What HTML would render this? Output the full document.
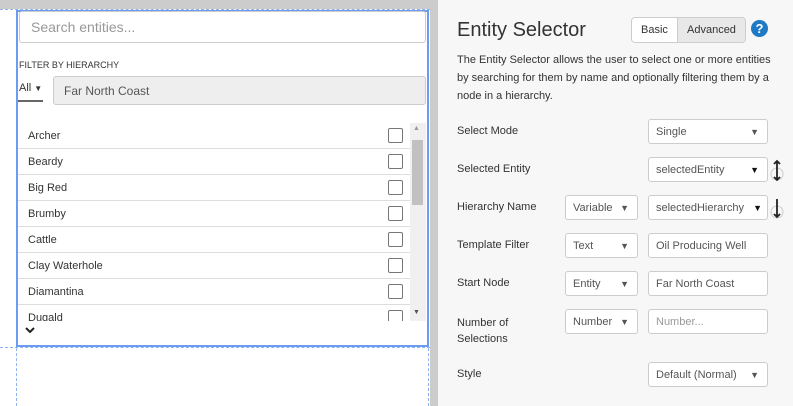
<!DOCTYPE html>
<html><head><meta charset="utf-8"><style>
*{box-sizing:border-box;margin:0;padding:0}
body{width:793px;height:406px;position:relative;overflow:hidden;background:#fff;font-family:"Liberation Sans",sans-serif;color:#333}
.a{position:absolute}
.lbl{font-size:11px;color:#333}
.sel{position:absolute;background:#fff;border:1px solid #ccc;border-radius:3px;height:25px;font-size:11px;color:#555;padding:6px 7px;line-height:12px}
.sel .ar{position:absolute;right:8px;top:6px;font-size:9px;color:#555}
.row{position:absolute;left:18px;width:392px;height:26px;border-bottom:1px solid #ddd;font-size:11px;color:#333;padding:7px 10px}
.cb{position:absolute;left:370px;top:5px;width:15px;height:15px;border:1.5px solid #777;border-radius:2px}
</style></head><body>
<div class="a" style="left:0;top:0;width:438px;height:9px;background:#ccc"></div>
<div class="a" style="left:430px;top:0;width:8px;height:406px;background:#ccc"></div>
<div class="a" style="left:0;top:9px;width:430px;border-top:1px dashed #8fb2f0"></div>
<div class="a" style="left:0;top:347px;width:430px;border-top:1px dashed #8fb2f0"></div>
<div class="a" style="left:16px;top:9px;height:397px;border-left:1px dashed #8fb2f0"></div>
<div class="a" style="left:428px;top:9px;height:397px;border-left:1px dashed #8fb2f0"></div>
<div class="a" style="left:16px;top:10px;width:413px;height:337px;border:2px solid #6c9cf0"></div>
<div class="a" style="left:19px;top:11px;width:407px;height:32px;border:1px solid #ccc;border-radius:3px;font-size:14px;color:#999;padding:7px 11px">Search entities...</div>
<div class="a" style="left:19px;top:60px;font-size:9px;color:#333">FILTER BY HIERARCHY</div>
<div class="a" style="left:19px;top:82px;font-size:11px;color:#333">All <span style="font-size:8px">▼</span></div>
<div class="a" style="left:18px;top:100px;width:25px;height:2px;background:#666"></div>
<div class="a" style="left:53px;top:76px;width:373px;height:29px;background:#eee;border:1px solid #ccc;border-radius:3px;font-size:12px;color:#555;padding:7px 10px">Far North Coast</div>
<div class="a" style="left:18px;top:123px;width:408px;height:198px;overflow:hidden">
<div class="row" style="left:0;top:0">Archer<div class="cb"></div></div>
<div class="row" style="left:0;top:26px">Beardy<div class="cb"></div></div>
<div class="row" style="left:0;top:52px">Big Red<div class="cb"></div></div>
<div class="row" style="left:0;top:78px">Brumby<div class="cb"></div></div>
<div class="row" style="left:0;top:104px">Cattle<div class="cb"></div></div>
<div class="row" style="left:0;top:130px">Clay Waterhole<div class="cb"></div></div>
<div class="row" style="left:0;top:156px">Diamantina<div class="cb"></div></div>
<div class="row" style="left:0;top:182px">Dugald<div class="cb"></div></div>
<div class="a" style="left:392px;top:0;width:16px;height:198px;background:#f0f0f0"></div>
<div class="a" style="left:394px;top:17px;width:11px;height:65px;background:#c1c1c1"></div>
<div class="a" style="left:395px;top:2px;font-size:7px;color:#999">▲</div>
<div class="a" style="left:395px;top:186px;font-size:7px;color:#555">▼</div>
</div>
<svg class="a" style="left:25px;top:326px" width="10" height="8"><path d="M1 2 L5 6 L9 2" stroke="#222" stroke-width="2" fill="none"/></svg>

<div class="a" style="left:438px;top:0;width:355px;height:406px;background:#f7f7f7"></div>
<div class="a" style="left:457px;top:19px;font-size:20px;color:#333">Entity Selector</div>
<div class="a" style="left:631px;top:17px;width:115px;height:26px;border:1px solid #ccc;border-radius:4px;overflow:hidden;font-size:11px">
<div class="a" style="left:0;top:0;width:45px;height:24px;background:#fff;padding:6px 9px">Basic</div>
<div class="a" style="left:45px;top:0;width:69px;height:24px;background:#e8e8e8;border-left:1px solid #ccc;padding:6px 9px">Advanced</div>
</div>
<div class="a" style="left:751px;top:20px;width:17px;height:17px;border-radius:50%;background:#1e7ac4;color:#fff;font-weight:bold;font-size:13px;text-align:center;line-height:17px">?</div>
<div class="a" style="left:457px;top:51px;width:320px;font-size:11px;line-height:18px;color:#333">The Entity Selector allows the user to select one or more entities by searching for them by name and optionally filtering them by a node in a hierarchy.</div>
<div class="a lbl" style="left:457px;top:125px">Select Mode</div>
<div class="sel" style="left:648px;top:119px;width:120px">Single<span class="ar">▼</span></div>
<div class="a lbl" style="left:457px;top:163px">Selected Entity</div>
<div class="sel" style="left:648px;top:157px;width:120px">selectedEntity<span class="ar" style="color:#111">▼</span></div>
<svg class="a" style="left:769px;top:159px" width="16" height="24"><circle cx="8" cy="15" r="6" fill="none" stroke="#ccc"/><path d="M8 2V21M5 5L8 2L11 5M5 18L8 21L11 18" stroke="#222" stroke-width="1.8" fill="none"/></svg>
<div class="a lbl" style="left:457px;top:201px">Hierarchy Name</div>
<div class="sel" style="left:565px;top:195px;width:73px">Variable<span class="ar">▼</span></div>
<div class="sel" style="left:648px;top:195px;width:120px">selectedHierarchy<span class="ar" style="color:#111;right:5px">▼</span></div>
<svg class="a" style="left:769px;top:197px" width="16" height="24"><circle cx="8" cy="15" r="6" fill="none" stroke="#ccc"/><path d="M8 2V20M5 17L8 20L11 17" stroke="#222" stroke-width="1.8" fill="none"/></svg>
<div class="a lbl" style="left:457px;top:239px">Template Filter</div>
<div class="sel" style="left:565px;top:233px;width:73px">Text<span class="ar">▼</span></div>
<div class="sel" style="left:648px;top:233px;width:120px">Oil Producing Well</div>
<div class="a lbl" style="left:457px;top:277px">Start Node</div>
<div class="sel" style="left:565px;top:271px;width:73px">Entity<span class="ar">▼</span></div>
<div class="sel" style="left:648px;top:271px;width:120px">Far North Coast</div>
<div class="a lbl" style="left:457px;top:315px;line-height:16px">Number of<br>Selections</div>
<div class="sel" style="left:565px;top:309px;width:73px">Number<span class="ar">▼</span></div>
<div class="sel" style="left:648px;top:309px;width:120px;color:#999">Number...</div>
<div class="a lbl" style="left:457px;top:368px">Style</div>
<div class="sel" style="left:648px;top:362px;width:120px">Default (Normal)<span class="ar">▼</span></div>
</body></html>
